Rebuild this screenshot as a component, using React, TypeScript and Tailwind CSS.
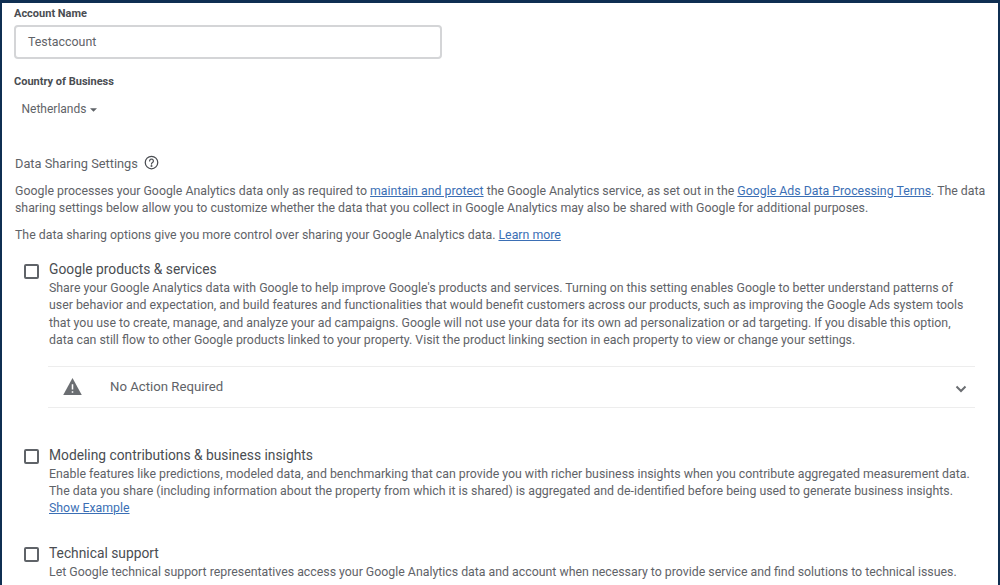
import React from "react";

const font = { fontFamily: "Roboto, 'Liberation Sans', sans-serif" };

function Check() {
  return <div className="w-[15px] h-[15px] shrink-0 border-2 border-[#5f6368] rounded-[2px]" />;
}

function A({ children }: { children: React.ReactNode }) {
  return <span className="text-[#3b6fb5] underline">{children}</span>;
}

export default function App() {
  return (
    <div className="w-[1000px] h-[585px] overflow-hidden bg-[#0f2f52] pt-[3px] pl-[2px] pr-[2px]" style={font}>
      <div className="h-[582px] bg-white overflow-hidden pl-[12px] pr-[2px] text-[#5f6368]">
        <div className="pt-[4px] text-[11px] leading-[14px] font-bold text-[#4a4d52]">Account Name</div>
        <div className="mt-[4px] w-[428px] h-[34px] border-2 border-[#d4d5d7] rounded-[4px] flex items-center pl-[12px] text-[12.4px] text-[#5f6368]">
          Testaccount
        </div>
        <div className="mt-[16px] text-[11px] leading-[14px] font-bold text-[#4a4d52]">Country of Business</div>
        <div className="mt-[12px] pl-[7.5px] flex items-center gap-[4px] text-[12px] leading-[16px]">
          Netherlands
          <svg width="7" height="4" viewBox="0 0 8 4" className="mt-[2px]"><path d="M0 0h8L4 4z" fill="#5f6368" /></svg>
        </div>
        <div className="mt-[38px] pl-[1px] flex items-center gap-[6px] text-[12.8px] leading-[18px]">
          Data Sharing Settings
          <svg width="15" height="15" viewBox="0 0 24 24" fill="none" stroke="#4a4d52" strokeWidth="2" strokeLinecap="round" className="-mt-[3px]">
            <circle cx="12" cy="12" r="10" />
            <path d="M9 9.5a3 3 0 1 1 4.5 2.6c-1 .6-1.5 1.2-1.5 2.4" />
            <circle cx="12" cy="17.5" r=".6" fill="#4a4d52" />
          </svg>
        </div>
        <p className="mt-[10px] pl-[1px] w-[984px] text-[12.34px] leading-[17px]">
          Google processes your Google Analytics data only as required to <A>maintain and protect</A> the Google Analytics service, as set out in the <A>Google Ads Data Processing Terms</A>. The data sharing settings below allow you to customize whether the data that you collect in Google Analytics may also be shared with Google for additional purposes.
        </p>
        <p className="mt-[10px] pl-[1px] text-[12.34px] leading-[17px]">
          The data sharing options give you more control over sharing your Google Analytics data. <A>Learn more</A>
        </p>

        <div className="mt-[16px] ml-[10px] flex gap-[10px]">
          <div className="pt-[4px]"><Check /></div>
          <div className="w-[925px]">
            <div className="text-[13.8px] leading-[18px] text-[#4a4d52]">Google products &amp; services</div>
            <p className="mt-[2px] text-[12.34px] leading-[17.4px]">
              Share your Google Analytics data with Google to help improve Google's products and services. Turning on this setting enables Google to better understand patterns of user behavior and expectation, and build features and functionalities that would benefit customers across our products, such as improving the Google Ads system tools that you use to create, manage, and analyze your ad campaigns. Google will not use your data for its own ad personalization or ad targeting. If you disable this option, data can still flow to other Google products linked to your property. Visit the product linking section in each property to view or change your settings.
            </p>
          </div>
        </div>

        <div className="mt-[16px] ml-[34px] w-[927px] h-[42px] border-y border-[#ededed] flex items-center">
          <svg width="19" height="17" viewBox="0 0 24 22" className="ml-[15px]">
            <path d="M12 0 24 22H0z" fill="#6b6e72" />
            <path d="M11 8h2v7h-2zM11 17h2v2h-2z" fill="#fff" />
          </svg>
          <span className="ml-[28px] text-[13.2px] text-[#5f6368]">No Action Required</span>
          <svg width="12" height="8" viewBox="0 0 12 8" className="ml-auto mr-[8px] mt-[4px]" fill="none" stroke="#6b6e72" strokeWidth="2"><path d="M1.5 1.5 6 6l4.5-4.5" /></svg>
        </div>

        <div className="mt-[39px] ml-[10px] flex gap-[10px]">
          <div className="pt-[2px]"><Check /></div>
          <div className="w-[925px]">
            <div className="text-[13.8px] leading-[17px] text-[#4a4d52]">Modeling contributions &amp; business insights</div>
            <p className="mt-[2px] text-[12.34px] leading-[17.4px]">
              Enable features like predictions, modeled data, and benchmarking that can provide you with richer business insights when you contribute aggregated measurement data. The data you share (including information about the property from which it is shared) is aggregated and de-identified before being used to generate business insights.
            </p>
            <div className="text-[12.34px] leading-[17px]"><A>Show Example</A></div>
          </div>
        </div>

        <div className="mt-[28px] ml-[10px] flex gap-[10px]">
          <div className="pt-[2px]"><Check /></div>
          <div className="w-[925px]">
            <div className="text-[13.8px] leading-[17px] text-[#4a4d52]">Technical support</div>
            <p className="mt-[2px] text-[12.34px] leading-[17.4px]">
              Let Google technical support representatives access your Google Analytics data and account when necessary to provide service and find solutions to technical issues.
            </p>
          </div>
        </div>
      </div>
    </div>
  );
}
